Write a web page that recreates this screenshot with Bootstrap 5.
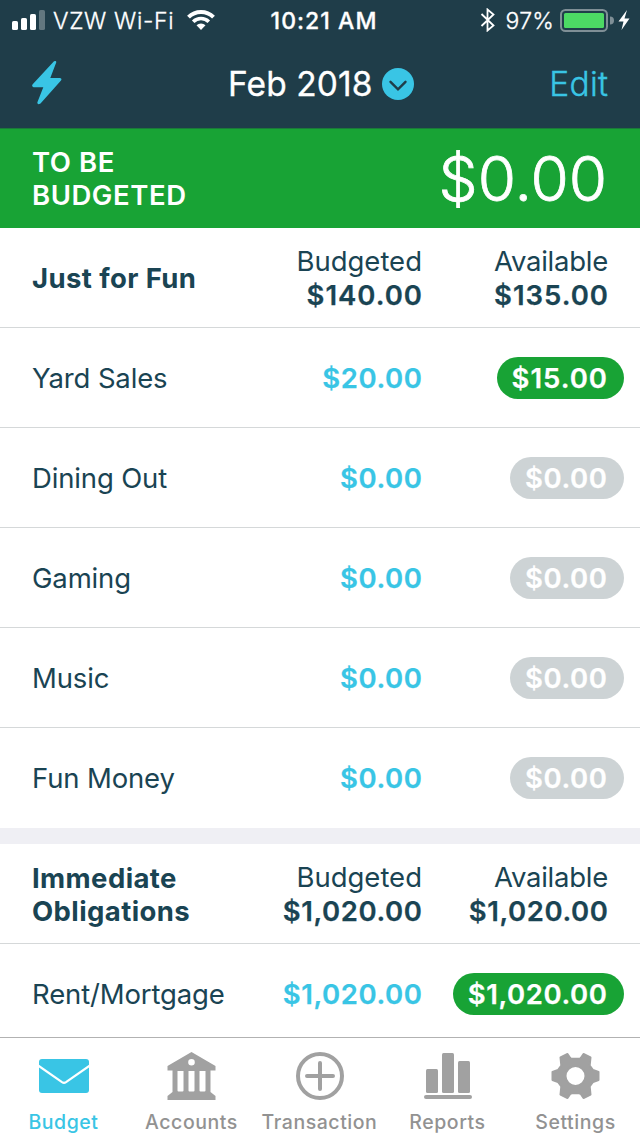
<!DOCTYPE html>
<html lang="en">
<head>
<meta charset="utf-8">
<meta name="viewport" content="width=device-width, initial-scale=1">
<title>Budget – Feb 2018</title>
<link rel="stylesheet" href="https://cdn.jsdelivr.net/npm/bootstrap@5.3.0/dist/css/bootstrap.min.css">
<style>
  :root { --navy:#1f3d49; --ink:#1a4453; --sky:#39c5e5; --go:#18a335; --rule:#d5d8d9; }
  body { font-family:Inter,"Liberation Sans",sans-serif; color:var(--ink); font-size:27.5px; line-height:33px; }
  .screen { width:640px; height:1136px; background:#fff; }
  .app-head { background:var(--navy); color:#fff; height:128px; }
  .status-bar { height:40px; font-size:23px; line-height:38px; padding:0 10px 0 12px; }
  .status-bar span, .clock { padding-top:2px; }
  .side { flex:1 1 0; }
  .carrier { letter-spacing:.65px; margin:0 13px 0 7px; font-weight:300; -webkit-text-stroke:.3px; }
  .clock { letter-spacing:1.05px; font-weight:500; margin-left:6px; -webkit-text-stroke:.3px; }
  .pct { font-weight:300; -webkit-text-stroke:.3px; letter-spacing:.2px; margin-left:10px; }
  .title-bar { height:88px; font-size:33.5px; padding:0 32px; }
  .month { letter-spacing:.1px; -webkit-text-stroke:.3px; margin-right:9px; }
  .edit { font-weight:300; -webkit-text-stroke:.4px; letter-spacing:.3px; margin-right:-.3px; }
  .title-bar .side:first-child { flex:0 0 196px; }
  .title-bar .side:first-child svg { margin-top:-2px; }
  .sky { color:var(--sky); }
  .tbb { background:var(--go); color:#fff; height:100px; border-top:1px solid #1b7a3a; padding:0 33px 0 32px; }
  .tbb-label { font-weight:600; letter-spacing:.55px; }
  .tbb-sum { font-size:62px; font-weight:300; line-height:98px; -webkit-text-stroke:.8px; }
  .line { height:100px; border-bottom:1px solid var(--rule); padding:2px 0 0 32px; }
  .line.last { border-bottom:0; padding-top:1px; }
  .line-name { flex:1 1 0; letter-spacing:-.15px; }
  .group-name { letter-spacing:.4px; font-weight:700; }
  .col-budget { width:170px; }
  .col-avail { width:218px; padding-right:32px; }
  .col-label { line-height:32px; margin-top:-1px; margin-bottom:2px; }
  .col-avail .col-label { letter-spacing:-.25px; }
  .col-pill { padding-right:16px; }
  .amount { font-weight:600; letter-spacing:.6px; margin-right:-.6px; -webkit-text-stroke:.25px; }
  .amount-wide { letter-spacing:1px; margin-right:-1px; }
  .pill { display:inline-block; height:42px; line-height:42px; border-radius:21px; padding:0 17px 0 15px; color:#fff; margin-top:-1px; }
  .pill-go { background:var(--go); }
  .pill-zero { background:#cdd3d5; }
  .gap-band { height:16px; background:#efeff4; }
  .cut { height:93px; border-bottom:0; padding-top:8px; }
  .tabs { height:99px; border-top:1px solid #b2b2b2; color:#929292; font-size:19.5px; line-height:24px; }
  .tab-item { width:128px; padding-top:12px; letter-spacing:.55px; font-weight:500; margin-left:-.5px; margin-right:.5px; }
  .tab-item svg { display:block; margin:0 auto 10px; }
</style>
</head>
<body>
<main class="screen d-flex flex-column overflow-hidden">
  <header class="app-head">
    <div class="status-bar d-flex align-items-center">
      <div class="side d-flex align-items-center">
        <svg width="34" height="20" viewBox="0 0 34 20" fill="#fff"><rect y="11" width="6" height="9" rx="1.6"/><rect x="9" y="8" width="6" height="12" rx="1.6"/><rect x="18" y="4" width="6" height="16" rx="1.6"/><rect x="27" width="6" height="20" rx="1.6" fill="#62777f"/></svg>
        <span class="carrier">VZW Wi-Fi</span>
        <svg width="28" height="20" viewBox="0 0 28 20"><path d="M1.5 7.2a17.7 17.7 0 0 1 25 0" fill="none" stroke="#fff" stroke-width="4"/><path d="M6.2 11.8a11 11 0 0 1 15.6 0" fill="none" stroke="#fff" stroke-width="3.6"/><path d="M9.5 15.3a6.4 6.4 0 0 1 9 0L14 20z" fill="#fff"/></svg>
      </div>
      <div class="clock">10:21 AM</div>
      <div class="side d-flex align-items-center justify-content-end">
        <svg width="16" height="24" viewBox="0 0 16 24" fill="none" stroke="#fff" stroke-width="1.8"><path d="M1.5 6 13.500 17.500l-6 5V1.500l6 5L1.500 18"/></svg>
        <span class="pct">97%</span>
        <svg class="ms-1" width="72" height="24" viewBox="0 0 72 24"><rect x="3" y="2" width="46" height="21" rx="4.5" fill="none" stroke="#7f8f96" stroke-width="2"/><rect x="6" y="5" width="40" height="15" rx="1.5" fill="#4cd964"/><path d="M52 8.500a4 4 0 0 1 0 8z" fill="#7f8f96"/><path d="M69 2 60.500 13.500h5l-2 8.500 8-11.500h-5z" fill="#fff"/></svg>
      </div>
    </div>
    <div class="title-bar d-flex align-items-center">
      <div class="side d-flex">
        <svg width="30" height="46" viewBox="0 0 30 46"><path d="M22 1.300Q24.600.300 24.200 2.500L18.300 18H28Q30.300 18.500 29 20.500L8.500 43.500Q5.500 45.500 5.300 42.500L11.300 27.300H1.500Q-.8 26.500.7 24.300z" fill="#39c5e5"/></svg>
      </div>
      <div class="d-flex align-items-center"><span class="month">Feb 2018</span>
        <svg width="32" height="32" viewBox="0 0 32 32"><circle cx="16" cy="16" r="16" fill="#39c5e5"/><path d="m8.500 13.800 7.500 7.500 7.500-7.500" fill="none" stroke="#1f3d49" stroke-width="2.400" stroke-linecap="round"/></svg>
      </div>
      <div class="side text-end sky edit">Edit</div>
    </div>
  </header>

  <section class="tbb d-flex align-items-center justify-content-between">
    <div class="tbb-label">TO BE<br>BUDGETED</div>
    <div class="tbb-sum">$0.00</div>
  </section>

  <section>
    <div class="line d-flex align-items-center">
      <div class="line-name group-name">Just for Fun</div>
      <div class="col-budget text-end"><div class="col-label">Budgeted</div><div class="amount amount-wide">$140.00</div></div>
      <div class="col-avail text-end"><div class="col-label">Available</div><div class="amount amount-wide">$135.00</div></div>
    </div>
    <div class="line d-flex align-items-center"><div class="line-name">Yard Sales</div><div class="col-budget text-end sky"><div class="amount">$20.00</div></div><div class="col-avail col-pill d-flex justify-content-end"><span class="pill pill-go"><span class="amount amount-wide">$15.00</span></span></div></div>
    <div class="line d-flex align-items-center"><div class="line-name">Dining Out</div><div class="col-budget text-end sky"><div class="amount">$0.00</div></div><div class="col-avail col-pill d-flex justify-content-end"><span class="pill pill-zero"><span class="amount">$0.00</span></span></div></div>
    <div class="line d-flex align-items-center"><div class="line-name">Gaming</div><div class="col-budget text-end sky"><div class="amount">$0.00</div></div><div class="col-avail col-pill d-flex justify-content-end"><span class="pill pill-zero"><span class="amount">$0.00</span></span></div></div>
    <div class="line d-flex align-items-center"><div class="line-name">Music</div><div class="col-budget text-end sky"><div class="amount">$0.00</div></div><div class="col-avail col-pill d-flex justify-content-end"><span class="pill pill-zero"><span class="amount">$0.00</span></span></div></div>
    <div class="line last d-flex align-items-center"><div class="line-name">Fun Money</div><div class="col-budget text-end sky"><div class="amount">$0.00</div></div><div class="col-avail col-pill d-flex justify-content-end"><span class="pill pill-zero"><span class="amount">$0.00</span></span></div></div>
  </section>
  <div class="gap-band"></div>
  <section>
    <div class="line d-flex align-items-center">
      <div class="line-name group-name">Immediate<br>Obligations</div>
      <div class="col-budget text-end"><div class="col-label">Budgeted</div><div class="amount">$1,020.00</div></div>
      <div class="col-avail text-end"><div class="col-label">Available</div><div class="amount">$1,020.00</div></div>
    </div>
    <div class="line cut d-flex align-items-center"><div class="line-name">Rent/Mortgage</div><div class="col-budget text-end sky"><div class="amount">$1,020.00</div></div><div class="col-avail col-pill d-flex justify-content-end"><span class="pill pill-go"><span class="amount">$1,020.00</span></span></div></div>
  </section>

  <nav class="tabs d-flex text-center">
    <div class="tab-item sky"><svg width="50" height="50" viewBox="0 0 50 50"><rect y="9" width="50" height="34" rx="3" fill="#39c5e5"/><path d="M-1 15.500 23 32.200q2 1.300 4 0L51 15.500" fill="none" stroke="#fff" stroke-width="2.200"/></svg>Budget</div>
    <div class="tab-item"><svg width="50" height="50" viewBox="0.500 0 50 50" fill="#a1a1a1"><path fill-rule="evenodd" d="M25 2 49 16v4.500H1V16zM25 9a3.300 3.300 0 1 0 0 6.600A3.300 3.300 0 0 0 25 9z"/><path fill-rule="evenodd" d="M6 20h38v22l5 4v4H1v-4l5-4zM11 21v19.500q0 1 1 1h4q1 0 1-1V21zM22 21v19.500q0 1 1 1h4q1 0 1-1V21zM33 21v19.500q0 1 1 1h4q1 0 1-1V21z"/></svg>Accounts</div>
    <div class="tab-item"><svg width="50" height="50" viewBox="0 0 50 50" fill="none" stroke="#a1a1a1" stroke-width="4" stroke-linecap="round"><circle cx="25" cy="26" r="22"/><path d="M25 13v26M12 26h26"/></svg>Transaction</div>
    <div class="tab-item"><svg width="50" height="50" viewBox="0 0 50 50" fill="#a1a1a1"><rect x="3" y="19" width="12" height="24" rx="1.500"/><rect x="19" y="3" width="12" height="40" rx="1.500"/><rect x="35" y="11" width="12" height="32" rx="1.500"/><rect x="1" y="45" width="48" height="4" rx="2"/></svg>Reports</div>
    <div class="tab-item"><svg width="50" height="50" viewBox="0.500 0 50 50"><path fill-rule="evenodd" fill="#a1a1a1" stroke="#a1a1a1" stroke-width="2" stroke-linejoin="round" d="M10 7.500 17 4l2.700 4q.8.800 2 .8h6.600q1.200 0 2-.8L33 4l7 3.500-.8 8 3.300 4.500 5.500 2v8l-5.500 2-3.300 4.500.8 8L33 48l-2.700-4q-.8-.8-2-.8h-6.600q-1.200 0-2 .8L17 48l-7-3.500.8-8L7.500 32 2 30v-8l5.500-2 3.300-4.500zM25 16a10 10 0 1 0 0 20 10 10 0 0 0 0-20z"/></svg>Settings</div>
  </nav>
</main>
<script src="https://cdn.jsdelivr.net/npm/bootstrap@5.3.0/dist/js/bootstrap.bundle.min.js"></script>
</body>
</html>
